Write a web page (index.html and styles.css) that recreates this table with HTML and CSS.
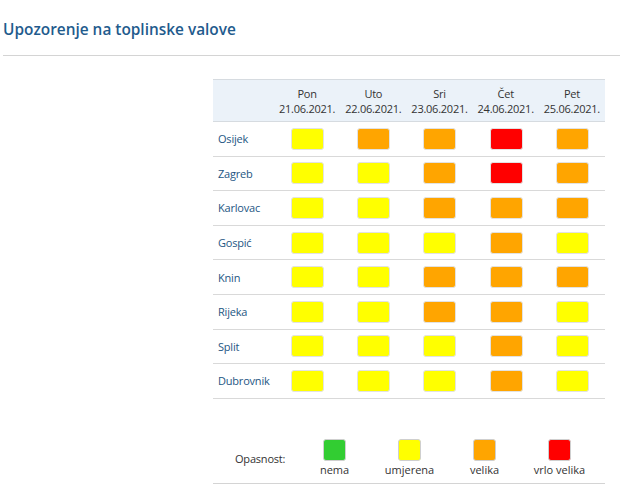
FILE: index.html
```html
<!DOCTYPE html>
<html lang="hr">
<head>
<meta charset="utf-8">
<link rel="stylesheet" href="styles.css">
</head>
<body>
<div class="page">
  <h2 class="title">Upozorenje na toplinske valove</h2>
  <div class="panel">
    <div class="grid">
      <div class="row head">
        <div class="cell city"></div>
        <div class="cell day">Pon<br>21.06.2021.</div>
        <div class="cell day">Uto<br>22.06.2021.</div>
        <div class="cell day">Sri<br>23.06.2021.</div>
        <div class="cell day">Čet<br>24.06.2021.</div>
        <div class="cell day">Pet<br>25.06.2021.</div>
      </div>
      <div class="row"><div class="cell city">Osijek</div><div class="cell"><span class="box y"></span></div><div class="cell"><span class="box o"></span></div><div class="cell"><span class="box o"></span></div><div class="cell"><span class="box r"></span></div><div class="cell"><span class="box o"></span></div></div>
      <div class="row"><div class="cell city">Zagreb</div><div class="cell"><span class="box y"></span></div><div class="cell"><span class="box y"></span></div><div class="cell"><span class="box o"></span></div><div class="cell"><span class="box r"></span></div><div class="cell"><span class="box o"></span></div></div>
      <div class="row"><div class="cell city">Karlovac</div><div class="cell"><span class="box y"></span></div><div class="cell"><span class="box y"></span></div><div class="cell"><span class="box o"></span></div><div class="cell"><span class="box o"></span></div><div class="cell"><span class="box o"></span></div></div>
      <div class="row"><div class="cell city">Gospić</div><div class="cell"><span class="box y"></span></div><div class="cell"><span class="box y"></span></div><div class="cell"><span class="box y"></span></div><div class="cell"><span class="box o"></span></div><div class="cell"><span class="box y"></span></div></div>
      <div class="row"><div class="cell city">Knin</div><div class="cell"><span class="box y"></span></div><div class="cell"><span class="box y"></span></div><div class="cell"><span class="box o"></span></div><div class="cell"><span class="box o"></span></div><div class="cell"><span class="box o"></span></div></div>
      <div class="row"><div class="cell city">Rijeka</div><div class="cell"><span class="box y"></span></div><div class="cell"><span class="box y"></span></div><div class="cell"><span class="box o"></span></div><div class="cell"><span class="box o"></span></div><div class="cell"><span class="box y"></span></div></div>
      <div class="row"><div class="cell city">Split</div><div class="cell"><span class="box y"></span></div><div class="cell"><span class="box y"></span></div><div class="cell"><span class="box y"></span></div><div class="cell"><span class="box o"></span></div><div class="cell"><span class="box y"></span></div></div>
      <div class="row"><div class="cell city">Dubrovnik</div><div class="cell"><span class="box y"></span></div><div class="cell"><span class="box y"></span></div><div class="cell"><span class="box y"></span></div><div class="cell"><span class="box o"></span></div><div class="cell"><span class="box y"></span></div></div>
    </div>
    <div class="legend">
      <div class="legend-label">Opasnost:</div>
      <div class="legend-item"><span class="lbox g"></span><span class="ltext">nema</span></div>
      <div class="legend-item"><span class="lbox y"></span><span class="ltext">umjerena</span></div>
      <div class="legend-item"><span class="lbox o"></span><span class="ltext">velika</span></div>
      <div class="legend-item"><span class="lbox r"></span><span class="ltext">vrlo velika</span></div>
    </div>
  </div>
</div>
</body>
</html>
```
FILE: styles.css
```css
html, body {
  margin: 0;
  padding: 0;
  background: #ffffff;
}
body {
  font-family: "Open Sans", "Noto Sans", sans-serif;
  color: #333333;
}
.page {
  width: 620px;
}
.title {
  margin: 0 0 0 3px;
  padding: 19px 0 14px 0;
  font-size: 15.4px;
  line-height: 22px;
  font-weight: 600;
  color: #1f5b8d;
  border-bottom: 1px solid #d4d4d4;
}
.panel {
  margin: 23px 0 0 213px;
  width: 392px;
}
.grid {
  display: flex;
  flex-direction: column;
}
.row {
  display: grid;
  grid-template-columns: 61px repeat(5, 1fr);
  height: 34.6px;
  box-sizing: border-box;
  border-bottom: 1px solid #d9d9d9;
  align-items: center;
}
.row.head {
  height: 43px;
  background: #ebf2f9;
  border-top: 1px solid #d6dbe0;
  border-bottom: 1px solid #d6dbe0;
  align-items: end;
  padding-bottom: 5px;
}
.cell {
  display: flex;
  justify-content: center;
  align-items: center;
  font-size: 11px;
}
.cell.day {
  text-align: center;
  line-height: 15px;
  color: #333;
  letter-spacing: -0.25px;
}
.cell.city {
  justify-content: flex-start;
  padding-left: 5px;
  color: #245683;
  letter-spacing: -0.2px;
}
.box {
  display: block;
  width: 31px;
  height: 20px;
  border: 1px solid #e2e2e2;
  border-radius: 3px;
  margin-left: 1px;
}
.y { background: #ffff00; }
.o { background: #ffa500; }
.r { background: #ff0000; }
.g { background: #32cd32; }
.legend {
  margin-top: 33px;
  display: grid;
  grid-template-columns: 84px repeat(4, 75px);
  align-items: start;
  height: 52px;
  padding-top: 7px;
  border-bottom: 1px solid #d4d4d4;
  box-sizing: border-box;
}
.legend-label {
  font-size: 11px;
  line-height: 15px;
  color: #333;
  padding-left: 22px;
  padding-top: 12px;
  letter-spacing: -0.2px;
}
.legend-item {
  display: flex;
  flex-direction: column;
  align-items: center;
}
.lbox {
  display: block;
  width: 21px;
  height: 20px;
  border: 1px solid #cfcfcf;
  border-radius: 3px;
}
.ltext {
  font-size: 11px;
  line-height: 15px;
  color: #333;
  margin-top: 1px;
}
```
